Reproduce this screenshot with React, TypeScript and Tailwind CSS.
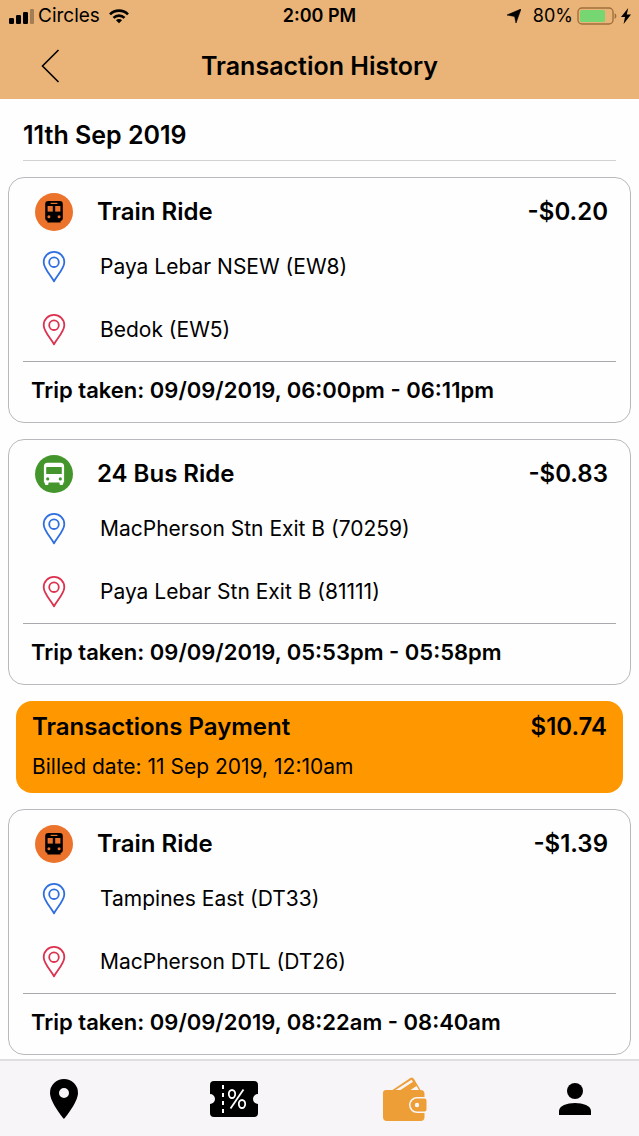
import React from 'react';

interface Ride {
    kind: 'train' | 'bus';
    title: string;
    amount: string;
    from: string;
    to: string;
    trip: string;
}

const rides: Ride[] = [
    {
        kind: 'train',
        title: 'Train Ride',
        amount: '-$0.20',
        from: 'Paya Lebar NSEW (EW8)',
        to: 'Bedok (EW5)',
        trip: '09/09/2019, 06:00pm - 06:11pm',
    },
    {
        kind: 'bus',
        title: '24 Bus Ride',
        amount: '-$0.83',
        from: 'MacPherson Stn Exit B (70259)',
        to: 'Paya Lebar Stn Exit B (81111)',
        trip: '09/09/2019, 05:53pm - 05:58pm',
    },
    {
        kind: 'train',
        title: 'Train Ride',
        amount: '-$1.39',
        from: 'Tampines East (DT33)',
        to: 'MacPherson DTL (DT26)',
        trip: '09/09/2019, 08:22am - 08:40am',
    },
];

const TrainIcon: React.FC = () => (
    <svg className="w-[38px] h-[38px] shrink-0" viewBox="0 0 38 38" aria-hidden="true">
        <circle cx="19" cy="19" r="19" fill="#ec732c" />
        <path d="M13.2 8h11.6a3 3 0 0 1 3 3v14.6a2.6 2.6 0 0 1-2.2 2.5v1.5H12.4v-1.5a2.6 2.6 0 0 1-2.2-2.5V11a3 3 0 0 1 3-3z" fill="#000" />
        <rect x="15.6" y="9.8" width="6.8" height="1.2" fill="#ec732c" />
        <rect x="12.6" y="13" width="5.2" height="5.6" fill="#ec732c" />
        <rect x="20.2" y="13" width="5.2" height="5.6" fill="#ec732c" />
        <circle cx="13.9" cy="23.8" r="1.5" fill="#ec732c" />
        <circle cx="24.1" cy="23.8" r="1.5" fill="#ec732c" />
    </svg>
);

const BusIcon: React.FC = () => (
    <svg className="w-[38px] h-[38px] shrink-0" viewBox="0 0 38 38" aria-hidden="true">
        <circle cx="19" cy="19" r="19" fill="#44962c" />
        <path d="M12.5 7.7h13a3.6 3.6 0 0 1 3.6 3.6v16.1h-.9v1.4a1.3 1.3 0 0 1-1.3 1.3h-1.100a1.3 1.3 0 0 1-1.3-1.3v-1.4h-11v1.4a1.3 1.3 0 0 1-1.3 1.3h-1.100a1.3 1.3 0 0 1-1.3-1.3v-1.4h-.9V11.3a3.600 3.600 0 0 1 3.600-3.600z" fill="#fff" />
        <rect x="11.2" y="12" width="15.6" height="7" rx="0.6" fill="#44962c" />
        <circle cx="12.7" cy="23.9" r="1.6" fill="#44962c" />
        <circle cx="25.3" cy="23.9" r="1.6" fill="#44962c" />
    </svg>
);

const Pin: React.FC<{ color: string }> = ({ color }) => (
    <svg className="w-6 h-8 shrink-0" viewBox="0 0 24 32" fill="none" stroke={color} strokeWidth="1.8" strokeLinejoin="round" aria-hidden="true">
        <path d="M12 30.4C9.600 25.400 1.700 17.600 1.700 11.200a10.300 10.300 0 0 1 20.600 0c0 6.400-7.900 14.200-10.300 19.200z" />
        <circle cx="12" cy="11.2" r="4.8" />
    </svg>
);

const Stop: React.FC<{ color: string; name: string }> = ({ color, name }) => (
    <li className="h-[63px] px-[33px] flex items-center gap-[34px]">
        <Pin color={color} />
        <span className="text-[21px] leading-8">{name}</span>
    </li>
);

const RideCard: React.FC<{ ride: Ride }> = ({ ride }) => (
    <article className="border border-[#b9b9bd] rounded-2xl pt-[15px] pb-4">
        <div className="pr-[22px] pl-[26px] flex items-center gap-6">
            {ride.kind === 'train' ? <TrainIcon /> : <BusIcon />}
            <h3 className="flex-1 text-2xl font-semibold">{ride.title}</h3>
            <span className="text-2xl font-semibold">{ride.amount}</span>
        </div>
        <ul className="mt-1">
            <Stop color="#2f6fe0" name={ride.from} />
            <Stop color="#dc3250" name={ride.to} />
        </ul>
        <p className="mx-[14px] px-2 pt-3 border-t border-[#a9a9ad] text-[22px] leading-8 font-semibold">
            Trip taken: {ride.trip}
        </p>
    </article>
);

const StatusBar: React.FC = () => (
    <div className="h-8 px-2 grid grid-cols-3 items-center text-[19px] leading-6">
        <div className="flex items-center gap-1">
            <svg className="w-[26px] h-4" viewBox="0 0 26 16" aria-hidden="true">
                <rect x="1" y="10" width="5" height="6" rx="1.2" />
                <rect x="8" y="7" width="5" height="9" rx="1.2" />
                <rect x="15" y="4" width="5" height="12" rx="1.2" />
                <rect x="22" y="1" width="4" height="15" rx="1" opacity="0.3" />
            </svg>
            <span>Circles</span>
            <svg className="w-[22px] h-4 ml-1" viewBox="0 0 24 16" fill="none" stroke="#000" strokeWidth="2.9" aria-hidden="true">
                <path d="M2.2 6.2a14 14 0 0 1 19.6 0" />
                <path d="M6 10a8.6 8.6 0 0 1 12 0" />
                <path d="M12 16l-3.3-3.4a4.7 4.7 0 0 1 6.6 0z" fill="#000" stroke="none" />
            </svg>
        </div>
        <div className="text-center text-[18px] font-semibold">2:00 PM</div>
        <div className="flex items-center justify-end text-[18px]">
            <svg className="w-[14px] h-[14px] mr-3" viewBox="0 0 14 14" aria-hidden="true">
                <path d="M14 0L9 14 7.600 7.400 0 6z" stroke="#000" strokeWidth="0.600" strokeLinejoin="round" />
            </svg>
            <span>80%</span>
            <svg className="w-10 h-[18px] ml-1" viewBox="0 0 40 18" aria-hidden="true">
                <rect x="1" y="1" width="35" height="16" rx="4" fill="none" stroke="#a0703c" strokeWidth="1.4" />
                <rect x="3" y="3" width="25" height="12" rx="1.5" fill="#76d672" />
                <path d="M37.600 6.200c2.400.8 2.400 4.800 0 5.600z" fill="#a0703c" />
            </svg>
            <svg className="w-[10px] h-4 ml-1" viewBox="0 0 10 16" aria-hidden="true">
                <path d="M7.2 0L0 9h4L2.6 16 10 6.6H5.8z" />
            </svg>
        </div>
    </div>
);

const TabBar: React.FC = () => (
    <nav className="sticky bottom-0 h-[77px] px-10 flex items-center justify-between bg-[#f7f5f8] border-t-2 border-[#dedee0]">
        <button type="button" aria-label="Nearby" className="w-12 h-12 flex items-center justify-center">
            <svg className="w-7 h-10" viewBox="0 0 28 40" aria-hidden="true">
                <path fillRule="evenodd" d="M14 0a14 14 0 0 0-14 14c0 9.5 14 26 14 26s14-16.500 14-26A14 14 0 0 0 14 0zm0 9a5 5 0 1 1 0 10 5 5 0 0 1 0-10z" />
            </svg>
        </button>
        <button type="button" aria-label="Promotions" className="w-12 h-12 flex items-center justify-center">
            <svg className="w-12 h-9" viewBox="0 0 48 36" fill="none" stroke="#fff" aria-hidden="true">
                <path d="M4 0h40a4 4 0 0 1 4 4v9a5 5 0 0 0 0 10v9a4 4 0 0 1-4 4H4a4 4 0 0 1-4-4v-9a5 5 0 0 0 0-10V4a4 4 0 0 1 4-4z" fill="#000" stroke="none" />
                <path d="M13 4v28" strokeWidth="2" strokeDasharray="4 4" />
                <ellipse cx="22" cy="13" rx="3.2" ry="4" strokeWidth="1.8" />
                <ellipse cx="32" cy="23" rx="3.2" ry="4" strokeWidth="1.8" />
                <path d="M33.5 8.5l-13 19" strokeWidth="1.8" />
            </svg>
        </button>
        <button type="button" aria-label="Wallet" className="w-12 h-12 flex items-center justify-center">
            <svg className="w-11 h-11" viewBox="0 0 44 44" aria-hidden="true">
                <path d="M3 13h6.500L27 1.200a2.800 2.800 0 0 1 4 .9L37.500 13a4 4 0 0 1 4 4v3H34a8 8 0 0 0 0 16h7.500v4a4 4 0 0 1-4 4H4a4 4 0 0 1-4-4V16a3 3 0 0 1 3-3z" fill="#ed9e37" />
                <path d="M12.500 13L28.500 2.800 30 4.800 17.500 13zM27.500 13l6-4 2.500 4z" fill="#f7f5f8" />
                <path d="M34 21.500h7.500a2 2 0 0 1 2 2v9a2 2 0 0 1-2 2H34a6.500 6.500 0 0 1 0-13z" fill="#ed9e37" />
                <circle cx="34" cy="28" r="2.2" fill="#f7f5f8" />
            </svg>
        </button>
        <button type="button" aria-label="Profile" className="w-12 h-12 flex items-center justify-center">
            <svg className="w-8 h-8" viewBox="0 0 32 32" aria-hidden="true">
                <circle cx="16" cy="8" r="8" />
                <path d="M0 32v-4c0-5.300 8-8 16-8s16 2.700 16 8v4z" />
            </svg>
        </button>
    </nav>
);

const App: React.FC = () => (
    <div className="min-h-screen flex flex-col bg-[#fefefe] text-black font-['Inter','Liberation_Sans',sans-serif]">
        <header className="bg-[#eab377]">
            <StatusBar />
            <div className="h-[67px] px-[30px] grid grid-cols-[40px_1fr_40px] items-center">
                <button type="button" aria-label="Back" className="h-10 flex items-center justify-center">
                    <svg className="w-5 h-[34px]" viewBox="0 0 20 34" fill="none" stroke="#000" strokeWidth="1.6" aria-hidden="true">
                        <path d="M18.5 1L2.5 17l16 16" />
                    </svg>
                </button>
                <h1 className="text-center text-[25px] leading-8 font-semibold">Transaction History</h1>
            </div>
        </header>

        <main className="flex-1 px-2 pb-1">
            <h2 className="mx-[15px] pt-5 pb-[9px] border-b border-[#d2d2d4] text-[25px] leading-8 font-semibold">11th Sep 2019</h2>
            <div className="mt-4 flex flex-col gap-4">
                <RideCard ride={rides[0]} />
                <RideCard ride={rides[1]} />

                {/* Billing summary */}
                <section className="mx-2 px-4 py-[10px] rounded-2xl bg-[#ff9800]">
                    <div className="flex items-center justify-between text-2xl font-semibold">
                        <h3>Transactions Payment</h3>
                        <span>$10.74</span>
                    </div>
                    <p className="mt-2 text-[21px] leading-8">Billed date: 11 Sep 2019, 12:10am</p>
                </section>

                <RideCard ride={rides[2]} />
            </div>
        </main>

        <TabBar />
    </div>
);

export default App;
